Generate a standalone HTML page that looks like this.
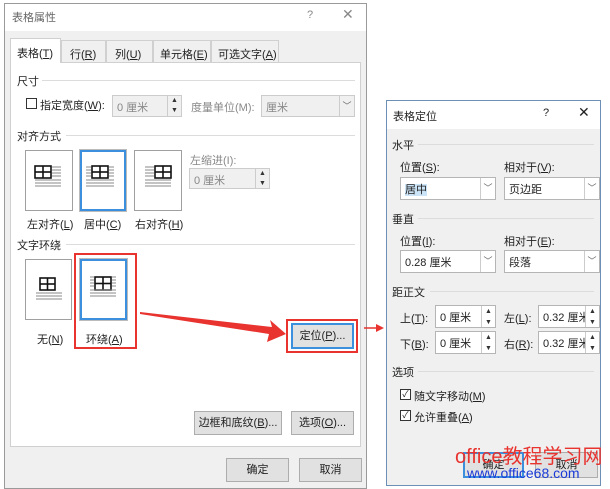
<!DOCTYPE html>
<html><head><meta charset="utf-8"><style>
*{box-sizing:border-box;margin:0;padding:0}
body{width:610px;height:489px;background:#fff;position:relative;overflow:hidden;font-family:"Liberation Sans","Noto Sans CJK SC",sans-serif;font-size:11px;color:#222}
.a{position:absolute}
.dlg{border:1px solid #9a9a9a;background:#f0f0f0}
.sec{position:absolute;font-size:11px}
.line{position:absolute;height:1px;background:#dcdcdc}
.btn{position:absolute;background:#e1e1e1;border:1px solid #adadad;text-align:center;font-size:11px}
.inp{position:absolute;background:#fff;border:1px solid #b5b5b5;font-size:11px;padding:3px 4px}
.dis{background:#f0f0f0;color:#888;border-color:#ccc}
.dd{position:absolute;right:0;top:0;bottom:0;width:15px;border-left:1px solid #ccc;color:#666;font-size:9px;text-align:center}
.spin{position:absolute;right:0;top:0;bottom:0;width:14px;border-left:1px solid #ccc;font-size:7px;line-height:10px;text-align:center;color:#333}
.ic{position:absolute;border:1px solid #a0a0a0;background:#fff}
u{text-decoration:underline}
</style></head><body>
<div class="a dlg" style="left:4px;top:3px;width:363px;height:486px"></div>
<div class="a" style="left:5px;top:4px;width:361px;height:27px;background:#fff"></div>
<div class="a" style="left:12px;top:9px;color:#666;font-size:11px">表格属性</div>
<div class="a" style="left:307px;top:9px;color:#888">?</div>
<div class="a" style="left:342px;top:6px;color:#888;font-size:14px">✕</div>
<div class="a" style="left:10px;top:62px;width:351px;height:385px;background:#fff;border:1px solid #d0d0d0"></div>
<div class="a" style="left:10px;top:38px;width:51px;height:25px;background:#fff;border:1px solid #d0d0d0;border-bottom:none;padding:6px 0 0 6px">表格(<u>T</u>)</div>
<div class="a" style="left:61px;top:40px;width:45px;height:22px;border:1px solid #d0d0d0;border-bottom:none;padding:5px 0 0 8px">行(<u>R</u>)</div>
<div class="a" style="left:106px;top:40px;width:47px;height:22px;border:1px solid #d0d0d0;border-bottom:none;padding:5px 0 0 8px">列(<u>U</u>)</div>
<div class="a" style="left:153px;top:40px;width:58px;height:22px;border:1px solid #d0d0d0;border-bottom:none;padding:5px 0 0 6px">单元格(<u>E</u>)</div>
<div class="a" style="left:211px;top:40px;width:68px;height:22px;border:1px solid #d0d0d0;border-bottom:none;padding:5px 0 0 6px">可选文字(<u>A</u>)</div>

<div class="sec" style="left:17px;top:73px">尺寸</div><div class="line" style="left:42px;top:80px;width:313px"></div>
<div class="a" style="left:26px;top:98px;width:11px;height:11px;border:1px solid #333;background:#fff"></div>
<div class="a" style="left:40px;top:97px">指定宽度(<u>W</u>):</div>
<div class="inp dis" style="left:112px;top:95px;width:70px;height:22px">0 厘米<div class="spin">▲<br>▼</div></div>
<div class="a" style="left:191px;top:99px;color:#888">度量单位(M):</div>
<div class="inp dis" style="left:261px;top:95px;width:94px;height:22px">厘米<div class="dd" style="line-height:20px">﹀</div></div>

<div class="sec" style="left:17px;top:128px">对齐方式</div><div class="line" style="left:66px;top:135px;width:289px"></div>
<div class="ic" style="left:25px;top:150px;width:48px;height:61px"></div>
<div class="ic" style="left:80px;top:150px;width:46px;height:61px;border:2px solid #3c8fdc;outline:1px solid #bbb"></div>
<div class="ic" style="left:134px;top:150px;width:48px;height:61px"></div>
<div class="a" style="left:27px;top:216px">左对齐(<u>L</u>)</div>
<div class="a" style="left:84px;top:216px">居中(<u>C</u>)</div>
<div class="a" style="left:135px;top:216px">右对齐(<u>H</u>)</div>
<div class="a" style="left:190px;top:152px;color:#888">左缩进(I):</div>
<div class="inp dis" style="left:189px;top:168px;width:81px;height:21px">0 厘米<div class="spin">▲<br>▼</div></div>

<div class="sec" style="left:17px;top:237px">文字环绕</div><div class="line" style="left:66px;top:244px;width:289px"></div>
<div class="ic" style="left:25px;top:259px;width:47px;height:61px"></div>
<div class="ic" style="left:80px;top:259px;width:47px;height:61px;border:2px solid #3c8fdc;outline:1px solid #bbb"></div>
<svg class="a" style="left:0;top:0" width="370" height="489">
<g stroke="#111" fill="none" stroke-width="1.6">
<rect x="35" y="166" width="16" height="12"/><line x1="43" y1="166" x2="43" y2="178"/><line x1="35" y1="172" x2="51" y2="172"/>
<rect x="92" y="166" width="16" height="12"/><line x1="100" y1="166" x2="100" y2="178"/><line x1="92" y1="172" x2="108" y2="172"/>
<rect x="155" y="166" width="16" height="12"/><line x1="163" y1="166" x2="163" y2="178"/><line x1="155" y1="172" x2="171" y2="172"/>
<rect x="40" y="278" width="15" height="12"/><line x1="47.5" y1="278" x2="47.5" y2="290"/><line x1="40" y1="284" x2="55" y2="284"/>
<rect x="95" y="277" width="16" height="13"/><line x1="103" y1="277" x2="103" y2="290"/><line x1="95" y1="283.5" x2="111" y2="283.5"/>
</g>
<g stroke="#888" stroke-width="1">
<path d="M52 167h9M52 170h9M52 173h9M52 176h9M35 180h26M35 183h26M35 186h26"/>
<path d="M86 167h5M109 167h5M86 170h5M109 170h5M86 173h5M109 173h5M86 176h5M109 176h5M86 180h28M86 183h28M86 186h28"/>
<path d="M145 167h9M145 170h9M145 173h9M145 176h9M145 180h26M145 183h26M145 186h26"/>
<path d="M36 293h26M36 296h26M36 299h26"/>
<path d="M90 277h4M112 277h4M90 280h4M112 280h4M90 283h4M112 283h4M90 286h4M112 286h4M90 290h26M90 293h26M90 296h26"/>
</g>
</svg>
<div class="a" style="left:37px;top:331px">无(<u>N</u>)</div>
<div class="a" style="left:86px;top:331px">环绕(<u>A</u>)</div>
<div class="a" style="left:74px;top:253px;width:63px;height:96px;border:2px solid #e8332f"></div>
<svg class="a" style="left:0;top:0" width="610" height="489">
<polygon points="140,312 272,327 270,320 286,334 267,342 269,334 140,314" fill="#e8332f"/>
<line x1="364" y1="328" x2="376" y2="328" stroke="#e8332f" stroke-width="1.5"/><polygon points="376,324 384,328 376,332" fill="#e8332f"/>
</svg>
<div class="a" style="left:286px;top:319px;width:72px;height:34px;border:2px solid #e8332f"></div>
<div class="btn" style="left:291px;top:323px;width:63px;height:26px;border:2px solid #3c8fdc;line-height:22px">定位(<u>P</u>)...</div>
<div class="btn" style="left:194px;top:411px;width:88px;height:24px;line-height:22px">边框和底纹(<u>B</u>)...</div>
<div class="btn" style="left:291px;top:411px;width:63px;height:24px;line-height:22px">选项(<u>O</u>)...</div>
<div class="btn" style="left:226px;top:458px;width:63px;height:24px;line-height:22px">确定</div>
<div class="btn" style="left:299px;top:458px;width:63px;height:24px;line-height:22px">取消</div>

<div class="a dlg" style="left:386px;top:100px;width:215px;height:386px;border-color:#6d8fb5"></div>
<div class="a" style="left:387px;top:101px;width:213px;height:28px;background:#fff"></div>
<div class="a" style="left:393px;top:108px">表格定位</div>
<div class="a" style="left:543px;top:107px">?</div>
<div class="a" style="left:578px;top:104px;font-size:14px">✕</div>
<div class="sec" style="left:392px;top:137px">水平</div><div class="line" style="left:418px;top:144px;width:176px"></div>
<div class="a" style="left:400px;top:159px">位置(<u>S</u>):</div>
<div class="a" style="left:504px;top:159px">相对于(<u>V</u>):</div>
<div class="inp" style="left:400px;top:177px;width:96px;height:23px"><span style="background:#cce4f7">居中</span><div class="dd" style="line-height:21px">﹀</div></div>
<div class="inp" style="left:504px;top:177px;width:96px;height:23px">页边距<div class="dd" style="line-height:21px">﹀</div></div>
<div class="sec" style="left:392px;top:211px">垂直</div><div class="line" style="left:418px;top:218px;width:176px"></div>
<div class="a" style="left:400px;top:233px">位置(<u>I</u>):</div>
<div class="a" style="left:504px;top:233px">相对于(<u>E</u>):</div>
<div class="inp" style="left:400px;top:250px;width:96px;height:23px">0.28 厘米<div class="dd" style="line-height:21px">﹀</div></div>
<div class="inp" style="left:504px;top:250px;width:96px;height:23px">段落<div class="dd" style="line-height:21px">﹀</div></div>
<div class="sec" style="left:392px;top:284px">距正文</div><div class="line" style="left:430px;top:291px;width:164px"></div>
<div class="a" style="left:400px;top:310px">上(<u>T</u>):</div>
<div class="inp" style="left:435px;top:305px;width:61px;height:23px">0 厘米<div class="spin" style="line-height:11px">▲<br>▼</div></div>
<div class="a" style="left:504px;top:310px">左(<u>L</u>):</div>
<div class="inp" style="left:538px;top:305px;width:62px;height:23px">0.32 厘米<div class="spin" style="line-height:11px;background:#fff">▲<br>▼</div></div>
<div class="a" style="left:400px;top:336px">下(<u>B</u>):</div>
<div class="inp" style="left:435px;top:331px;width:61px;height:23px">0 厘米<div class="spin" style="line-height:11px">▲<br>▼</div></div>
<div class="a" style="left:504px;top:336px">右(<u>R</u>):</div>
<div class="inp" style="left:538px;top:331px;width:62px;height:23px">0.32 厘米<div class="spin" style="line-height:11px;background:#fff">▲<br>▼</div></div>
<div class="sec" style="left:392px;top:364px">选项</div><div class="line" style="left:418px;top:371px;width:176px"></div>
<div class="a" style="left:400px;top:389px;width:11px;height:11px;border:1px solid #333;background:#fff;font-size:9px;line-height:9px;text-align:center">✓</div>
<div class="a" style="left:414px;top:388px">随文字移动(<u>M</u>)</div>
<div class="a" style="left:400px;top:410px;width:11px;height:11px;border:1px solid #333;background:#fff;font-size:9px;line-height:9px;text-align:center">✓</div>
<div class="a" style="left:414px;top:409px">允许重叠(<u>A</u>)</div>
<div class="btn" style="left:463px;top:452px;width:61px;height:26px;border:2px solid #3c8fdc;line-height:22px">确定</div>
<div class="btn" style="left:535px;top:452px;width:63px;height:26px;line-height:24px">取消</div>
<div class="a" style="left:455px;top:445px;color:#e8332f;font-size:20px;line-height:24px;white-space:nowrap">office教程学习网</div>
<div class="a" style="left:467px;top:465px;color:#1a3ad8;font-size:14px;line-height:17px;white-space:nowrap">www.office68.com</div>
</body></html>
